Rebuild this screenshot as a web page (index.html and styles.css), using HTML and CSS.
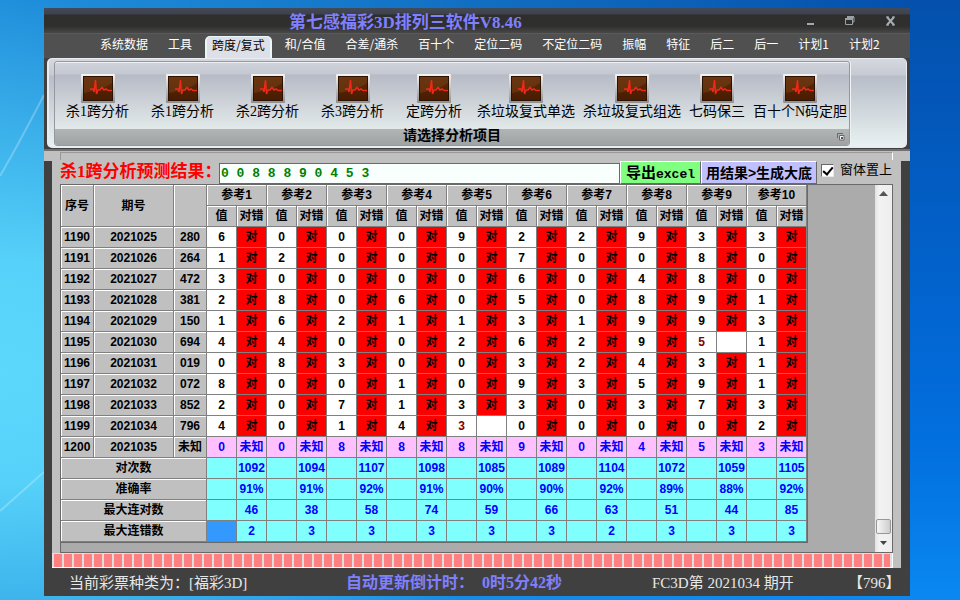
FILE: index.html
```html
<!DOCTYPE html>
<html lang="zh-CN">
<head>
<meta charset="utf-8">
<title>第七感福彩3D排列三软件V8.46</title>
<link rel="stylesheet" href="styles.css">
</head>
<body>
<svg class="streaks" viewBox="0 0 44 600" aria-hidden="true">
  <path d="M44 95 C30 122 14 152 0 176" fill="none" stroke="#fff" stroke-opacity=".25" stroke-width="2"/>
  <path d="M44 472 L0 511" fill="none" stroke="#fff" stroke-opacity=".25" stroke-width="2"/>
</svg>
<svg class="symbols" aria-hidden="true">
  <defs>
    <linearGradient id="frame" x1="0" y1="0" x2="0" y2="1"><stop offset="0" stop-color="#f4f4f4"/><stop offset="1" stop-color="#8f8f8f"/></linearGradient>
    <linearGradient id="screen" x1="0" y1="0" x2="0" y2="1"><stop offset="0" stop-color="#5c2a08"/><stop offset="1" stop-color="#481c02"/></linearGradient>
    <symbol id="pulse" viewBox="0 0 34 29">
      <rect x="0" y="0" width="34" height="29" rx="1" fill="url(#frame)"/>
      <rect x="2" y="2" width="30" height="25" fill="#2c1202"/>
      <rect x="3" y="3" width="28" height="23" fill="url(#screen)"/>
      <path d="M3 3H31V9C22 16 12 17 3 19Z" fill="#7a4218" opacity=".5"/>
      <path d="M9 15H12L13 18L14.500 6L15.500 20L17 16H19L21 13.500L23 16L25 15L27 16.500H31" fill="none" stroke="#f02818" stroke-width="1.500"/>
    </symbol>
  </defs>
</svg>
<main class="window">
  <header class="titlebar">
    <h1 class="title">第七感福彩3D排列三软件V8.46</h1>
    <div class="controls">
      <button type="button" aria-label="最小化"><svg width="14" height="12"><path d="M3 9H10" stroke="#a4a8ae" stroke-width="2"/></svg></button>
      <button type="button" aria-label="还原"><svg width="14" height="12"><path d="M3.500 3.500V2H10V7H8.500M1.500 4H8.500V9.500H1.500Z" fill="none" stroke="#9aa0a6"/><path d="M1 4H9M3 2H10" stroke="#9aa0a6" stroke-width="2"/></svg></button>
      <button type="button" aria-label="关闭"><svg width="14" height="12"><path d="M3 2L10 10M10 2L3 10" stroke="#a8acb2" stroke-width="2"/><path d="M2 2H5M8 2H11M2 10H5M8 10H11" stroke="#a8acb2"/></svg></button>
    </div>
  </header>
  <nav class="tabs">
    <button type="button">系统数据</button><button type="button">工具</button><button type="button" class="active">跨度/复式</button><button type="button">和/合值</button><button type="button">合差/通杀</button><button type="button">百十个</button><button type="button">定位二码</button><button type="button">不定位二码</button><button type="button">振幅</button><button type="button">特征</button><button type="button">后二</button><button type="button">后一</button><button type="button">计划1</button><button type="button">计划2</button>
  </nav>
  <section class="ribbon">
    <div class="group">
      <div class="tools">
        <button type="button" class="wide"><svg><use href="#pulse"/></svg>杀1跨分析</button>
        <button type="button" class="wide"><svg><use href="#pulse"/></svg>杀1跨分析</button>
        <button type="button" class="wide"><svg><use href="#pulse"/></svg>杀2跨分析</button>
        <button type="button" class="wide"><svg><use href="#pulse"/></svg>杀3跨分析</button>
        <button type="button" class="wide"><svg><use href="#pulse"/></svg>定跨分析</button>
        <button type="button"><svg><use href="#pulse"/></svg>杀垃圾复式单选</button>
        <button type="button"><svg><use href="#pulse"/></svg>杀垃圾复式组选</button>
        <button type="button"><svg><use href="#pulse"/></svg>七码保三</button>
        <button type="button"><svg><use href="#pulse"/></svg>百十个N码定胆</button>
      </div>
      <div class="caption">请选择分析项目
        <svg class="launcher" width="9" height="9" aria-hidden="true"><path d="M1.500 6V1.500H7" fill="none" stroke="#666b70"/><path d="M3.500 3.500H8V8H3.500Z" fill="#f4f6f6" stroke="#666b70"/><path d="M5 5H7V7H5Z" fill="#555"/></svg>
      </div>
    </div>
  </section>
  <div class="strip"><div class="etch"></div></div>
  <section class="client">
    <div class="query">
      <label class="result-label" for="result">杀1跨分析预测结果：</label>
      <input id="result" type="text" value="0 0 8 8 8 9 0 4 5 3">
      <button type="button" class="export">导出<span>excel</span></button>
      <button type="button" class="generate">用结果&gt;生成大底</button>
      <input id="ontop" type="checkbox" checked><label class="ontop-label" for="ontop">窗体置上</label>
    </div>
    <div class="sheet">
      <div class="sheet-view">
        <table>
          <colgroup><col class="c-no"><col class="c-issue"><col class="c-num"><col span="20" class="c-val"></colgroup>
          <thead></thead>
          <tbody></tbody>
        </table>
      </div>
      <div class="scrollbar">
        <svg width="17" height="17" aria-hidden="true"><path d="M4 11L8.500 6L13 11Z" fill="#555"/></svg>
        <div class="thumb"></div>
        <svg width="17" height="17" aria-hidden="true"><path d="M5 6L8.500 10L12 6Z" fill="#444"/></svg>
      </div>
    </div>
    <div class="progress" role="progressbar" aria-label="进度"><div class="chunks"></div></div>
  </section>
  <footer class="status">
    <span>当前彩票种类为：[福彩3D]</span>
    <span class="timer">自动更新倒计时：&nbsp; 0时5分42秒</span>
    <span class="draw">FC3D第 2021034 期开</span>
    <span class="last">【796】</span>
  </footer>
</main>
<script src="table.js"></script>
</body>
</html>
```
FILE: styles.css
```css
* { box-sizing: border-box; }
body {
  margin: 0;
  min-height: 100vh;
  padding: 8px 50px 4px 44px;
  display: flex;
  font-family: "Liberation Sans", "Noto Sans CJK SC", sans-serif;
  font-size: 12px;
  background:
    radial-gradient(ellipse 60% 62% at 0 62%, rgba(92, 216, 252, 1), rgba(92, 216, 252, .9) 30%, transparent),
    linear-gradient(to right, #2090dc, transparent 95%),
    linear-gradient(#0450ac, #0262cc 45%, #0270e0 75%, #0a88f2);
}
.streaks { position: absolute; left: 0; top: 0; width: 44px; height: 600px; }
.symbols { position: absolute; width: 0; height: 0; }
button { font: inherit; border: 0; padding: 0; margin: 0; background: none; color: inherit; white-space: nowrap; }
.window { position: relative; flex: 1; min-width: 0; display: flex; flex-direction: column; background: #404040; }

.titlebar {
  display: flex;
  height: 26px;
  border-bottom: 1px solid #5a5a5a;
  background: linear-gradient(#454a58, #3d414c 6px, #2d2e2d 7px, #2f2f2e 18px, #474747);
}
.title {
  flex: 1;
  margin: 0 0 0 245px;
  font: bold 17px/30px "Liberation Serif", "Noto Sans CJK SC", serif;
  color: #8080ff;
  white-space: nowrap;
}
.controls { display: flex; align-items: center; gap: 26px; padding-right: 12px; }
.controls svg { display: block; }

.tabs { display: flex; height: 24px; padding-left: 46px; background: #505050; color: #fff; font-family: "Noto Sans CJK SC", sans-serif; }
.tabs button { height: 20px; padding: 0 10px; line-height: 20px; }
.tabs .active {
  height: 22px;
  margin: 2px 3px 0;
  padding: 0 5px 5px;
  line-height: 16px;
  color: #000;
  border: solid #e8f8fa;
  border-width: 1px 2px 0;
  border-radius: 5px 5px 0 0;
  background: #dde0e8;
}

.ribbon {
  margin: 0 3px;
  height: 90px;
  padding: 2px 56px 2px 5px;
  border: solid #e9ecf0;
  border-width: 1px 1px 2px 2px;
  border-radius: 5px;
  background: linear-gradient(#d5d8df, #c6cad3 16px, #b8bdc8 17px, #e8f1f1);
}
.group {
  display: flex;
  flex-direction: column;
  height: 85px;
  border: 1px solid #9498a0;
  border-radius: 3px;
  box-shadow: inset 0 1px #eef0f3, 1px 0 #f0f2f4;
  overflow: hidden;
  background: linear-gradient(#d0d3dc, #c4c8d1 12px, #b7bbc6 13px, #e3eaea 68px);
}
.tools { display: flex; flex: 1; align-items: flex-start; padding-top: 12px; }
.tools button { padding: 0 4px; font: 14px/18px "Liberation Serif", "Noto Sans CJK SC", serif; }
.tools .wide { padding: 0 11px; }
.tools svg { display: block; width: 34px; height: 29px; margin: 0 auto; }
.caption {
  position: relative;
  height: 16px;
  font-size: 14px;
  font-weight: bold;
  line-height: 12px;
  text-align: center;
  background: linear-gradient(#b2b5b5, #9fa3a3);
}
.launcher { position: absolute; right: 4px; top: 3px; }

.strip { margin-top: 3px; height: 10px; padding: 1px 17px 0 16px; background: #c0c0c0; box-shadow: 0 -2px #707070; }
.etch { height: 8px; border: solid #999; border-width: 1px 0 0 1px; border-right: 1px solid #fff; }

.client { margin: 0 9px 0 8px; flex: 1; display: flex; flex-direction: column; background: #c0c0c0; }
.query { display: flex; height: 23px; padding: 0 8px; }
.result-label {
  flex: 0 0 159px;
  min-width: 0;
  font: bold 17px/22px "Liberation Serif", "Noto Sans CJK SC", serif;
  color: #f00;
  white-space: nowrap;
}
#result {
  flex: 1;
  min-width: 0;
  height: 21px;
  margin-top: 2px;
  padding: 0 1px;
  border: 1px solid #696969;
  font: bold 13px "Liberation Mono", monospace;
  color: #008000;
  background: #f8fffc;
}
.export, .generate { border: 1px solid; border-color: #fff #696969 #696969 #fff; font-weight: bold; text-align: center; }
.query .export { width: 81px; font-size: 15px; line-height: 20px; background: #80ff80; }
.export span { font: bold 13px "Liberation Mono", monospace; }
.query .generate { width: 116px; font-size: 14px; line-height: 20px; background: #c0c0ff; }
#ontop {
  appearance: none;
  width: 13px;
  height: 13px;
  margin: 3px 6px 0 4px;
  border: 1px solid;
  border-color: #696969 #e8e8e8 #e8e8e8 #696969;
  background: #fff;
}
#ontop:checked::after {
  content: "";
  display: block;
  width: 4px;
  height: 8px;
  margin: 0 0 0 3px;
  border: solid #000;
  border-width: 0 2px 2px 0;
  transform: rotate(40deg);
}
.ontop-label { width: 53px; font-size: 13px; line-height: 17px; white-space: nowrap; }

.sheet {
  flex: 1;
  display: flex;
  margin: 0 8px;
  border: 1px solid #696969;
  background: #ababab;
}
.sheet-view { flex: 1; min-width: 0; overflow: hidden; }
table {
  width: 747px;
  margin: -1px 0 0 -1px;
  table-layout: fixed;
  border-collapse: collapse;
  box-shadow: 1px 1px #696969;
  font-weight: bold;
  text-align: center;
}
.c-no { width: 33px; }
.c-issue { width: 80px; }
.c-num { width: 33px; }
.c-val { width: 30px; }
tr { height: 21px; }
th, td { padding: 0; border: 1px solid #808080; font-size: 12px; line-height: 18px; white-space: nowrap; overflow: hidden; }
th { background: #c0c0c0; box-shadow: inset 1px 1px #fff; }
td { background: #fff; }
.hit { background: #f00; }
.miss { color: #800000; }
.next td { background: #ffc0ff; color: #00f; }
.sum td { background: #80ffff; color: #00f; }
.sum .selected { background: #3399ff; }
.scrollbar { width: 17px; display: flex; flex-direction: column; background: linear-gradient(to right, #e3e3e3, #f2f2f2 4px, #eee); }
.thumb {
  width: 15px;
  height: 15px;
  margin: auto 1px 1px;
  border: 1px solid #979797;
  border-radius: 2px;
  background: linear-gradient(to right, #f6f6f6, #cdcdd0);
}

.progress { height: 15px; margin-right: 8px; padding: 1px; border: solid #fff; border-width: 0 1px 1px 0; background: #dedede; }
.chunks { height: 13px; margin: 0 1px; background: repeating-linear-gradient(to right, #ff8080 0 8px, #dedede 8px 10px); }

.status {
  display: grid;
  grid-template-columns: 277fr 306fr 196fr 54fr;
  height: 28px;
  padding: 0 8px 0 25px;
  font: 15px/30px "Liberation Serif", "Noto Sans CJK SC", serif;
  color: #e8e8e8;
  white-space: nowrap;
}
.timer { color: #8080ff; font-size: 16px; font-weight: bold; }
```
FILE: table.js
```js
const draws = [
  ["1190", "2021025", "280", "6000922933"],
  ["1191", "2021026", "264", "1200070080"],
  ["1192", "2021027", "472", "3000060480"],
  ["1193", "2021028", "381", "2806050891"],
  ["1194", "2021029", "150", "1621131993"],
  ["1195", "2021030", "694", "4400262951"],
  ["1196", "2021031", "019", "0830032431"],
  ["1197", "2021032", "072", "8001093591"],
  ["1198", "2021033", "852", "2071330373"],
  ["1199", "2021034", "796", "4014300002"]
];
const misses = { 1195: 8, 1199: 4 };
const next = ["1200", "2021035", "0088890453"];
const sums = [
  ["对次数", [1092, 1094, 1107, 1098, 1085, 1089, 1104, 1072, 1059, 1105]],
  ["准确率", ["91%", "91%", "92%", "91%", "90%", "90%", "92%", "89%", "88%", "92%"]],
  ["最大连对数", [46, 38, 58, 74, 59, 66, 63, 51, 44, 85]],
  ["最大连错数", [2, 3, 3, 3, 3, 3, 2, 3, 3, 3]]
];

let head = '<tr><th rowspan="2">序号</th><th rowspan="2">期号</th><th rowspan="2"></th>';
for (let i = 1; i <= 10; i++) head += `<th colspan="2">参考${i}</th>`;
head += "</tr><tr>" + "<th>值</th><th>对错</th>".repeat(10) + "</tr>";
document.querySelector("thead").innerHTML = head;

let body = "";
for (const [no, issue, num, values] of draws) {
  body += `<tr><th>${no}</th><th>${issue}</th><th>${num}</th>`;
  [...values].forEach((v, i) => {
    body += misses[no] === i
      ? `<td class="miss">${v}</td><td></td>`
      : `<td>${v}</td><td class="hit">对</td>`;
  });
  body += "</tr>";
}
body += `<tr class="next"><th>${next[0]}</th><th>${next[1]}</th><th>未知</th>`;
for (const v of next[2]) body += `<td>${v}</td><td>未知</td>`;
body += "</tr>";
sums.forEach(([name, cells], row) => {
  body += `<tr class="sum"><th colspan="3">${name}</th>`;
  cells.forEach((v, i) => {
    body += `<td${row === 3 && i === 0 ? ' class="selected"' : ""}></td><td>${v}</td>`;
  });
  body += "</tr>";
});
document.querySelector("tbody").innerHTML = body;
```
